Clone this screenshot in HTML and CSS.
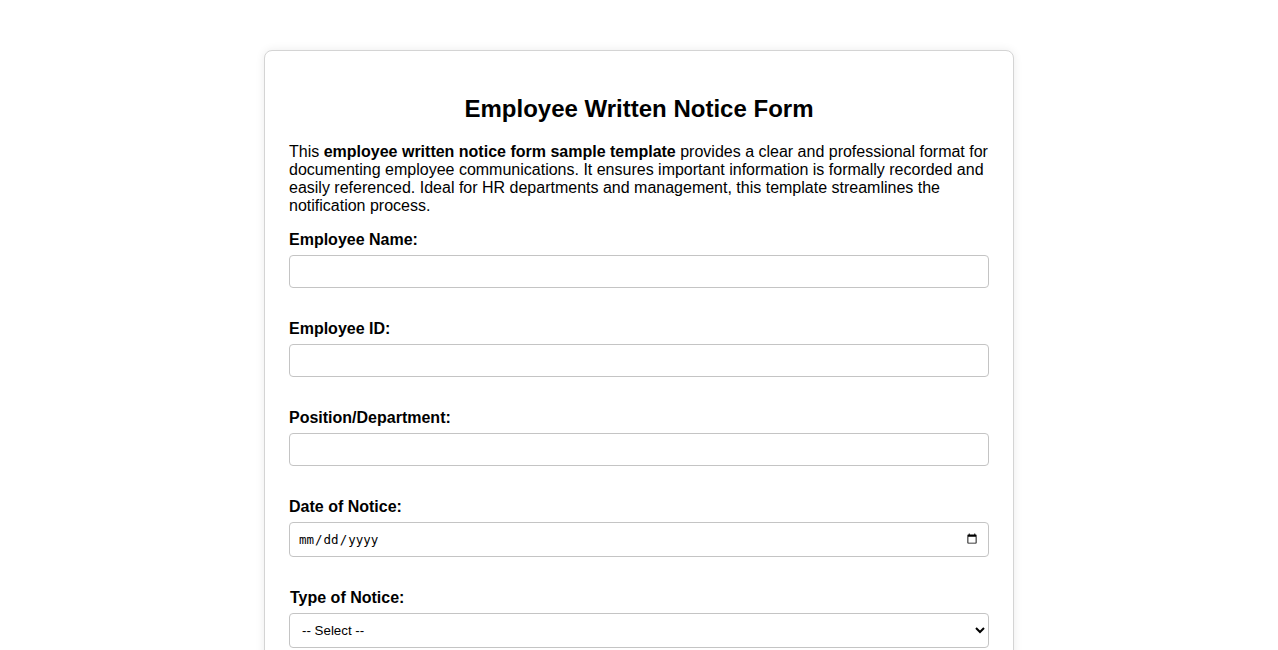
FILE: index.html
```html
<!DOCTYPE html>
<html lang="en">
<head>
<meta charset="utf-8">
<title>Employee Written Notice Form</title>
<link rel="stylesheet" href="styles.css">
</head>
<body>
<div class="card">
  <h1 class="title">Employee Written Notice Form</h1>
  <p class="intro">This <strong>employee written notice form sample template</strong> provides a clear and professional format for documenting employee communications. It ensures important information is formally recorded and easily referenced. Ideal for HR departments and management, this template streamlines the notification process.</p>
  <form class="form">
    <div class="group">
      <label class="label" for="name">Employee Name:</label>
      <input class="field" type="text" id="name">
    </div>
    <div class="group">
      <label class="label" for="eid">Employee ID:</label>
      <input class="field" type="text" id="eid">
    </div>
    <div class="group">
      <label class="label" for="pos">Position/Department:</label>
      <input class="field" type="text" id="pos">
    </div>
    <div class="group">
      <label class="label" for="date">Date of Notice:</label>
      <input class="field date" type="date" id="date">
    </div>
    <div class="group">
      <label class="label label-shift" for="type">Type of Notice:</label>
      <select class="field select" id="type">
        <option>-- Select --</option>
        <option>Verbal Warning</option>
        <option>Written Warning</option>
        <option>Final Warning</option>
      </select>
    </div>
  </form>
</div>
</body>
</html>
```

FILE: styles.css
```css
html, body {
  margin: 0;
  padding: 0;
  background: #ffffff;
}

body {
  font-family: "Liberation Sans", Arial, sans-serif;
  color: #000;
  padding-top: 50px;
}

.card {
  box-sizing: border-box;
  width: 750px;
  margin: 0 auto;
  padding: 24px 24px 40px;
  border: 1px solid #d4d4d4;
  border-radius: 8px;
  box-shadow: 0 0 10px rgba(0, 0, 0, 0.08);
  background: #fff;
}

.title {
  font-size: 24px;
  font-weight: bold;
  text-align: center;
  margin: 20px 0 20px;
}

.intro {
  font-size: 16px;
  margin: 0 0 16px;
}

.group {
  margin-bottom: 32px;
}

.label {
  display: block;
  font-size: 16px;
  font-weight: bold;
  line-height: 18px;
  margin-bottom: 6px;
}

.label-shift {
  padding-left: 1px;
}

.field {
  display: block;
  box-sizing: border-box;
  width: 100%;
  padding: 8px;
  border: 1px solid #c4c4c4;
  border-radius: 4px;
  background: #fff;
  margin: 0;
}

.date {
  font-size: 12.5px;
}

.select {
  padding: 8px 8px;
}
```
